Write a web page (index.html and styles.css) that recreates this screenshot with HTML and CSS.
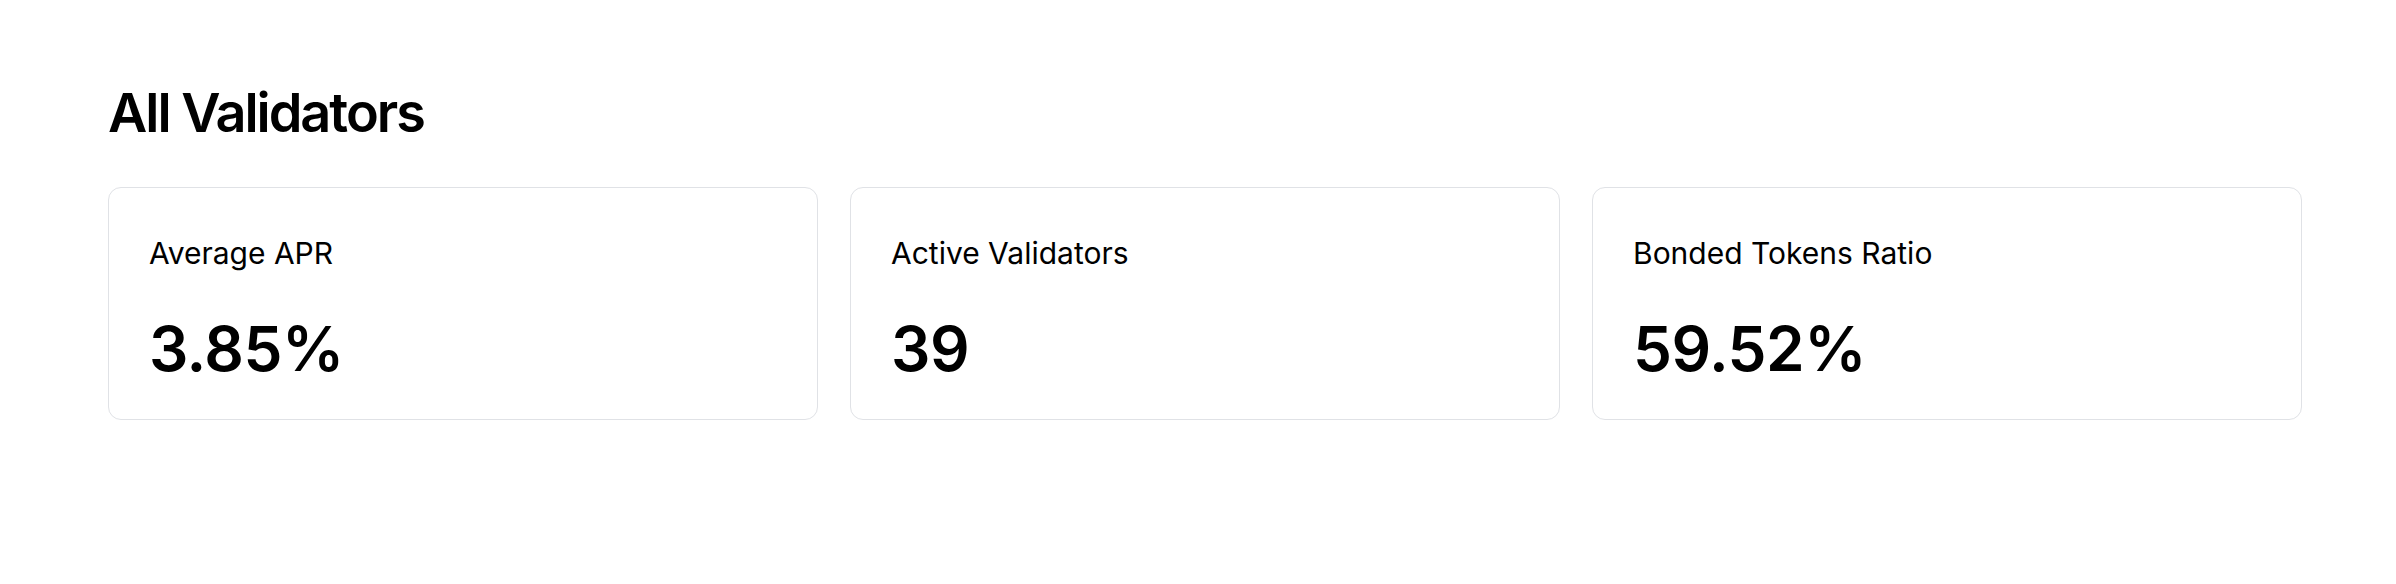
FILE: index.html
```html
<!DOCTYPE html>
<html lang="en">
<head>
<meta charset="utf-8">
<title>All Validators</title>
<link rel="stylesheet" href="styles.css">
</head>
<body>
<main class="page">
  <h1 class="title">All Validators</h1>
  <section class="stats">
    <div class="card">
      <div class="label">Average APR</div>
      <div class="value">3.85%</div>
    </div>
    <div class="card">
      <div class="label">Active Validators</div>
      <div class="value">39</div>
    </div>
    <div class="card">
      <div class="label">Bonded Tokens Ratio</div>
      <div class="value">59.52%</div>
    </div>
  </section>
</main>
</body>
</html>
```
FILE: styles.css
```css
html, body {
  margin: 0;
  padding: 0;
  background: #ffffff;
}
body {
  font-family: Inter, "Noto Sans", "Liberation Sans", sans-serif;
  color: #000000;
}
.page {
  padding: 86px 94px 0 108px;
}
.title {
  margin: 0 0 47px 0;
  font-size: 54px;
  line-height: 1;
  font-weight: 600;
  letter-spacing: -2px;
}
.stats {
  display: grid;
  grid-template-columns: repeat(3, 1fr);
  gap: 32px;
}
.card {
  border: 1px solid #e0e2e6;
  border-radius: 13px;
  padding: 50px 40px 39px 40px;
  display: flex;
  flex-direction: column;
  gap: 50px;
}
.label {
  font-size: 30px;
  line-height: 1;
  font-weight: 400;
}
.value {
  font-size: 62px;
  line-height: 1;
  font-weight: 600;
  letter-spacing: -0.5px;
}
```
